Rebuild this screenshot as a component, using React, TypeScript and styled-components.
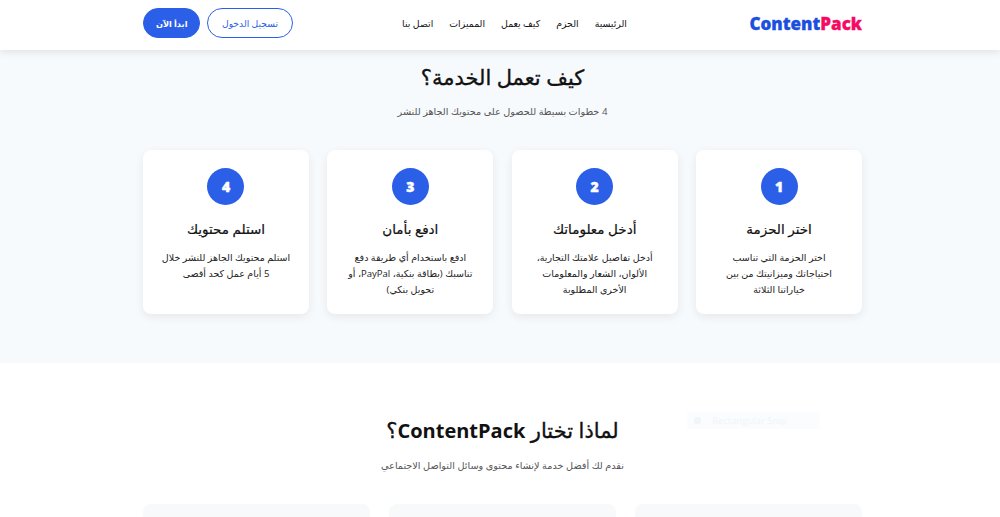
import React from "react";
import styled, { createGlobalStyle } from "styled-components";

const GlobalStyle = createGlobalStyle`
    html, body {
        margin: 0;
        height: 517px;
        overflow: hidden;
        background: #fff;
    }
    body {
        font-family: "Open Sans", "DejaVu Sans", sans-serif;
    }
    * {
        box-sizing: border-box;
    }
`;

const Page = styled.div`
    direction: rtl;
    position: relative;
    height: 517px;
    overflow: hidden;
`;

const Header = styled.header`
    position: relative;
    z-index: 2;
    height: 50px;
    padding: 0 138px 4px 143px;
    display: flex;
    align-items: center;
    justify-content: space-between;
    background: #fff;
    box-shadow: 0 2px 8px rgba(0, 0, 0, 0.1);
`;

const Logo = styled.div`
    direction: ltr;
    font-size: 17px;
    font-weight: 800;
    color: #1a4fe0;
    -webkit-text-stroke: 0.3px currentColor;
    span {
        color: #f50a64;
    }
`;

const Nav = styled.nav`
    display: flex;
    gap: 16px;
    margin-right: 13px;
    font-size: 9.4px;
    color: #111;
`;

const Actions = styled.div`
    display: flex;
    gap: 7px;
`;

const PillButton = styled.button<{ $filled?: boolean }>`
    height: 30px;
    padding: 0 ${(p) => (p.$filled ? "12px" : "13.5px")};
    border-radius: 15px;
    border: 1px solid #2b5fe8;
    font-family: inherit;
    font-size: ${(p) => (p.$filled ? "8.2px" : "9.2px")};
    font-weight: ${(p) => (p.$filled ? 700 : 400)};
    color: ${(p) => (p.$filled ? "#fff" : "#2b5fe8")};
    background: ${(p) => (p.$filled ? "#2b5fe8" : "#fff")};
`;

const HowSection = styled.section`
    height: 313px;
    padding: 12px 138px 0 143px;
    background: #f7fafc;
`;

const SectionTitle = styled.h2`
    margin: 0;
    text-align: center;
    font-size: 21px;
    line-height: 30px;
    font-weight: 400;
    color: #111;
    -webkit-text-stroke: 0.35px currentColor;
    b {
        font-size: 20px;
        font-weight: 700;
        -webkit-text-stroke: 0;
    }
`;

const SectionSub = styled.p`
    margin: 11px 0 0;
    text-align: center;
    font-size: 9.7px;
    line-height: 18px;
    color: #555;
`;

const Steps = styled.div`
    margin-top: 29px;
    display: grid;
    grid-template-columns: repeat(4, 1fr);
    gap: 18.4px;
`;

const StepCard = styled.div`
    height: 164px;
    padding: 18px 17px 0;
    display: flex;
    flex-direction: column;
    align-items: center;
    text-align: center;
    background: #fff;
    border-radius: 8px;
    box-shadow: 0 3px 10px rgba(0, 0, 0, 0.07);
`;

const StepNumber = styled.div`
    width: 37px;
    height: 37px;
    border-radius: 50%;
    display: flex;
    align-items: center;
    justify-content: center;
    background: #2b5fe8;
    color: #fff;
    font-size: 14px;
    font-weight: 800;
    -webkit-text-stroke: 0.4px currentColor;
`;

const StepTitle = styled.h3`
    margin: 14px 0 0;
    font-size: 13.5px;
    line-height: 20px;
    font-weight: 400;
    color: #111;
    -webkit-text-stroke: 0.2px currentColor;
`;

const StepText = styled.p`
    margin: 11px 0 0;
    font-size: 9.5px;
    line-height: 16px;
    color: #222;
`;

const WhySection = styled.section`
    padding: 52px 138px 0 143px;
    background: #fff;
`;

const FeatureGrid = styled.div`
    margin-top: 29px;
    display: grid;
    grid-template-columns: repeat(3, 1fr);
    gap: 18.4px;
`;

const FeatureCard = styled.div`
    height: 120px;
    border-radius: 8px;
    background: #f8f9fa;
`;

const SnipGhost = styled.div`
    position: absolute;
    left: 687px;
    top: 412px;
    width: 133px;
    height: 17px;
    padding-left: 7px;
    direction: ltr;
    display: flex;
    align-items: center;
    gap: 11px;
    background: #fafcfe;
    color: #f1f4f8;
    font-size: 9.5px;
    i {
        width: 7px;
        height: 7px;
        border-radius: 2px;
        background: #f1f5fa;
    }
`;

const steps = [
    {
        n: 1,
        title: "اختر الحزمة",
        text: "اختر الحزمة التي تناسب احتياجاتك وميزانيتك من بين خياراتنا الثلاثة",
    },
    {
        n: 2,
        title: "أدخل معلوماتك",
        text: "أدخل تفاصيل علامتك التجارية، الألوان، الشعار والمعلومات الأخرى المطلوبة",
    },
    {
        n: 3,
        title: "ادفع بأمان",
        text: "ادفع باستخدام أي طريقة دفع تناسبك (بطاقة بنكية، PayPal، أو تحويل بنكي)",
    },
    {
        n: 4,
        title: "استلم محتويك",
        text: "استلم محتويك الجاهز للنشر خلال 5 أيام عمل كحد أقصى",
    },
];

const App = () => {
    return (
        <Page>
            <GlobalStyle />
            <Header>
                <Logo>
                    Content<span>Pack</span>
                </Logo>
                <Nav>
                    <a>الرئيسية</a>
                    <a>الحزم</a>
                    <a>كيف يعمل</a>
                    <a>المميزات</a>
                    <a>اتصل بنا</a>
                </Nav>
                <Actions>
                    <PillButton>تسجيل الدخول</PillButton>
                    <PillButton $filled>ابدأ الآن</PillButton>
                </Actions>
            </Header>

            {/* How it works */}
            <HowSection>
                <SectionTitle>كيف تعمل الخدمة؟</SectionTitle>
                <SectionSub>4 خطوات بسيطة للحصول على محتويك الجاهز للنشر</SectionSub>
                <Steps>
                    {steps.map((step) => (
                        <StepCard key={step.n}>
                            <StepNumber>{step.n}</StepNumber>
                            <StepTitle>{step.title}</StepTitle>
                            <StepText>{step.text}</StepText>
                        </StepCard>
                    ))}
                </Steps>
            </HowSection>

            {/* Why us */}
            <WhySection>
                <SectionTitle>
                    لماذا تختار <b>ContentPack</b>؟
                </SectionTitle>
                <SectionSub>نقدم لك أفضل خدمة لإنشاء محتوى وسائل التواصل الاجتماعي</SectionSub>
                <FeatureGrid>
                    <FeatureCard />
                    <FeatureCard />
                    <FeatureCard />
                </FeatureGrid>
            </WhySection>

            <SnipGhost>
                <i />
                Rectangular Snip
            </SnipGhost>
        </Page>
    );
};

export default App;
